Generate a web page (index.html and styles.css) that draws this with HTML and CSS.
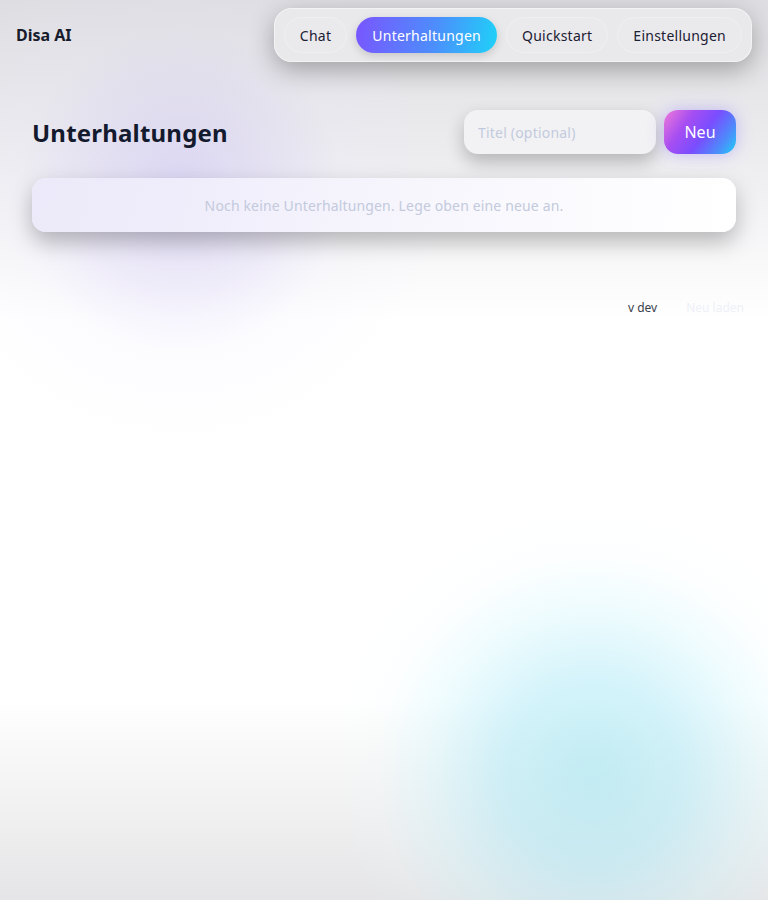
FILE: index.html
```html
<!DOCTYPE html>
<html lang="de">
<head>
<meta charset="utf-8">
<title>Disa AI</title>
<link rel="stylesheet" href="styles.css">
</head>
<body>
<header class="topbar">
  <div class="brand">Disa AI</div>
  <nav class="nav">
    <a class="nav-item">Chat</a>
    <a class="nav-item active">Unterhaltungen</a>
    <a class="nav-item">Quickstart</a>
    <a class="nav-item">Einstellungen</a>
  </nav>
</header>
<main class="main">
  <div class="head-row">
    <h1 class="title">Unterhaltungen</h1>
    <div class="actions">
      <input class="title-input" type="text" placeholder="Titel (optional)">
      <button class="btn-new">Neu</button>
    </div>
  </div>
  <div class="empty-card">Noch keine Unterhaltungen. Lege oben eine neue an.</div>
</main>
<footer class="footer">
  <span class="version">v dev</span>
  <span class="reload">Neu laden</span>
</footer>
</body>
</html>
```

FILE: styles.css
```css
* { box-sizing: border-box; }
html { margin: 0; padding: 0; height: 900px; overflow: hidden; }
body {
  margin: 0;
  width: 768px;
  height: 900px;
  overflow: hidden;
  font-family: "Noto Sans", "Open Sans", sans-serif;
  color: #141a2e;
  background:
    radial-gradient(circle 260px at 180px 190px, rgba(200,190,245,0.5) 0%, rgba(210,200,245,0.32) 35%, rgba(230,225,250,0.12) 62%, rgba(255,255,255,0) 100%),
    radial-gradient(circle 260px at 592px 770px, rgba(160,228,240,0.6) 0%, rgba(170,232,246,0.5) 35%, rgba(195,243,252,0.28) 62%, rgba(230,250,254,0.1) 82%, rgba(255,255,255,0) 100%),
    linear-gradient(180deg, #dedee2 0px, #ededf0 160px, #ffffff 320px, #ffffff 700px, #f7f7f7 760px, #e5e5e7 900px);
}
.topbar {
  display: flex; align-items: center; justify-content: space-between;
  padding: 8px 16px 0 16px;
}
.brand { font-weight: 700; font-size: 16px; color: #171b2b; }
.nav {
  display: flex; gap: 9px; align-items: center;
  padding: 9px 10px;
  border-radius: 18px;
  background: rgba(233,233,235,0.95);
  box-shadow: 0 8px 26px rgba(0,0,0,0.3), inset 0 0 0 1px rgba(255,255,255,0.45);
}
.nav-item {
  display: inline-flex; align-items: center; justify-content: center;
  height: 36px; padding: 0 16px;
  border-radius: 18px;
  font-size: 14px; letter-spacing: 0.25px; color: #1c2033;
  background: #eaeaec;
  box-shadow: inset 0 0 0 1px rgba(255,255,255,0.25);
}
.nav-item.active {
  color: #fff;
  background: linear-gradient(100deg, #7a55ff 0%, #4d8dfc 55%, #1ed2f8 100%);
  box-shadow: 0 3px 8px rgba(0,0,0,0.15);
}
.main { padding: 0 32px; }
.head-row {
  display: flex; align-items: center; justify-content: space-between;
  margin-top: 48px;
}
.title { margin: 0; font-size: 24px; font-weight: 700; letter-spacing: 0.2px; color: #141a2e; }
.actions { display: flex; gap: 8px; }
.title-input {
  width: 192px; height: 44px;
  border: none; outline: none;
  border-radius: 14px;
  padding: 0 14px;
  font-family: inherit; font-size: 14px; letter-spacing: 0.2px;
  background: #f2f2f4;
  box-shadow: 0 8px 18px rgba(0,0,0,0.24);
}
.title-input::placeholder { color: #c2cadd; }
.btn-new {
  width: 72px; height: 44px;
  border: none; border-radius: 14px;
  font-family: inherit; font-size: 16px; color: #fff;
  background: linear-gradient(125deg, #f07ad8 0%, #a64ef2 30%, #7a4dff 55%, #4c8cfb 80%, #20d0f6 100%);
  box-shadow: 0 0 16px rgba(120,90,255,0.35);
}
.empty-card {
  margin-top: 24px;
  height: 54px;
  display: flex; align-items: center; justify-content: center;
  border-radius: 14px;
  font-size: 14px; letter-spacing: 0.15px; color: #c3cadc;
  background: linear-gradient(90deg, rgba(236,233,250,0.92) 0%, rgba(246,245,253,0.96) 50%, rgba(255,255,255,1) 100%);
  box-shadow: 0 10px 22px rgba(0,0,0,0.26);
}
.footer {
  display: flex; justify-content: flex-end; gap: 29px;
  padding: 67px 24px 0 0;
  font-size: 12px;
}
.version { color: #3a3d4a; }
.reload { color: #eef0f8; }
```
